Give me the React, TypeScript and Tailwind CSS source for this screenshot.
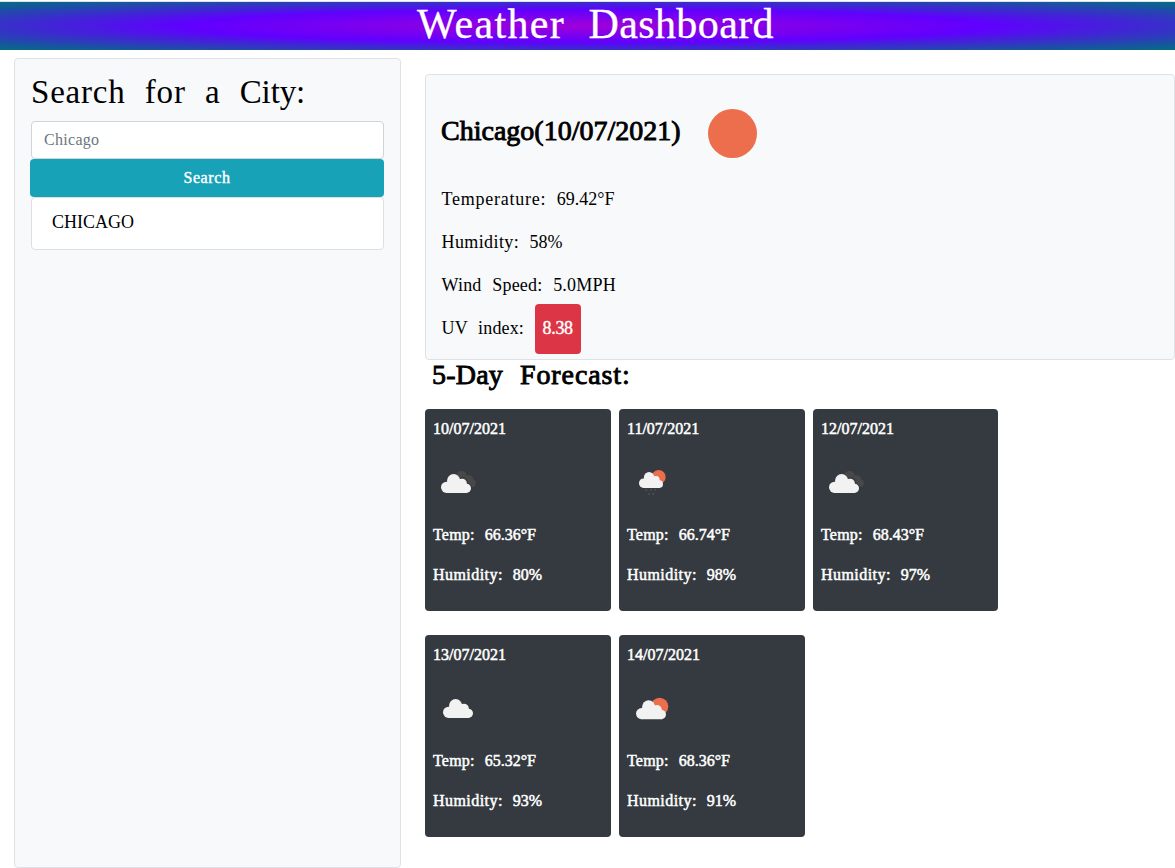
type IconKind = 'broken' | 'rain' | 'cloud' | 'few';

function Cloud({ transform }: { transform: string }) {
  return (
    <g transform={transform} fill="#f2f2f2">
      <circle cx="5.6" cy="13.3" r="5.6" />
      <circle cx="12.6" cy="6.5" r="6.5" />
      <circle cx="21" cy="9.5" r="4.8" />
      <circle cx="25.4" cy="14.3" r="4.6" />
      <path d="M5.4 18.9 V9.5 L6.6 7 L18 5 L25 8.5 L26 12 V18.9 Z" />
    </g>
  );
}

function WeatherIcon({ kind }: { kind: IconKind }) {
  return (
    <svg width="50" height="50" viewBox="0 0 50 50" className="block">
      {kind === 'broken' && (
        <>
          <g fill="#484848">
            <circle cx="28.5" cy="18" r="5.2" />
            <circle cx="36" cy="21.3" r="4" />
            <circle cx="38.8" cy="25.2" r="4" />
            <path d="M27 19 L35 17.5 L41 28 L35 28 Z" />
          </g>
          <path d="M26 21.8 a4.6 4.6 0 0 1 8.4 3.6 a4.8 4.8 0 0 1 4.2 5" stroke="#343a40" strokeWidth="1" fill="none" />
          <Cloud transform="translate(8 16)" />
        </>
      )}
      {kind === 'rain' && (
        <>
          <circle cx="31.7" cy="19" r="7" fill="#ec6e4c" />
          <Cloud transform="translate(12 14) scale(0.8 0.84)" />
          <path
            d="M20 31l-1.4 2.2M24.5 31l-1 1.6M28.7 31l-1 1.6M22.8 34.8l-1.2 2M26.8 34.8l-1.2 2"
            stroke="#505050"
            strokeWidth="1.5"
            fill="none"
          />
        </>
      )}
      {kind === 'cloud' && <Cloud transform="translate(10 15)" />}
      {kind === 'few' && (
        <>
          <circle cx="32.6" cy="22.5" r="8.7" fill="#ec6e4c" />
          <Cloud transform="translate(9 16.3)" />
        </>
      )}
    </svg>
  );
}

const days: { date: string; icon: IconKind; temp: string; humidity: string }[] = [
  { date: '10/07/2021', icon: 'broken', temp: '66.36°F', humidity: '80%' },
  { date: '11/07/2021', icon: 'rain', temp: '66.74°F', humidity: '98%' },
  { date: '12/07/2021', icon: 'broken', temp: '68.43°F', humidity: '97%' },
  { date: '13/07/2021', icon: 'cloud', temp: '65.32°F', humidity: '93%' },
  { date: '14/07/2021', icon: 'few', temp: '68.36°F', humidity: '91%' },
];

export default function App() {
  return (
    <div className="flex h-[868px] w-full flex-col overflow-hidden bg-white font-['Liberation_Serif',serif] text-black">
      <header className="mt-px flex h-[49px] shrink-0 justify-center border-t border-[#dee2e6] bg-[radial-gradient(#a000d8,#6000ff_48%,#007080)]">
        <h1 className="ml-4 mt-[-2px] whitespace-nowrap text-[42px] leading-[48px] text-white [word-spacing:13px] [-webkit-text-stroke:0.3px_white]">
          <span className="tracking-[1.3px]">Weather</span> <span className="tracking-[0.4px]">Dashboard</span>
        </h1>
      </header>

      <div className="flex min-h-0 flex-1">
        <aside className="ml-[14px] mt-2 h-[810px] w-[387px] shrink-0 rounded border border-[#dee2e6] bg-[#f8f9fa] px-4 pt-[14px]">
          <h2 className="h-12 whitespace-nowrap text-[33px] leading-[38px] tracking-[0.8px] [word-spacing:10.2px]">
            Search for a <span className="tracking-[-0.1px]">City:</span>
          </h2>
          <input
            className="block h-[38px] w-[353px] rounded border border-[#ced4da] bg-white px-3 text-[16px] tracking-[0.3px] placeholder:text-[#6c757d]"
            placeholder="Chicago"
          />
          <button className="-ml-px block h-[38px] w-[354px] rounded bg-[#17a2b8] text-[16px] tracking-[0.6px] text-white [-webkit-text-stroke:0.4px_white]">
            Search
          </button>
          <ul className="h-[53px] w-[353px] rounded border border-[#dfdfdf] bg-white px-5 pt-[11px]">
            <li className="text-[18px] leading-[26px]">CHICAGO</li>
          </ul>
        </aside>

        <main className="ml-6 flex-1 pt-6">
          <section className="h-[286px] rounded border border-[#dee2e6] bg-[#f8f9fa] pl-[15px]">
            <div className="flex h-[111px] items-center">
              <h3 className="mt-px w-[241px] whitespace-nowrap text-[28px] leading-[34px] [-webkit-text-stroke:0.9px_black]">
                Chicago(10/07/2021)
              </h3>
              <svg width="50" height="50" viewBox="0 0 50 50" className="ml-[25px] mt-[5px]">
                <circle cx="25.5" cy="25.5" r="24.5" fill="#ec6e4c" />
              </svg>
            </div>
            <div className="pl-[0.5px] text-[18px] leading-[27px] [word-spacing:6px]">
              <p className="mb-4">
                <span className="tracking-[0.75px]">Temperature:</span> 69.42°F
              </p>
              <p className="mb-4">
                <span className="tracking-[0.4px]">Humidity:</span> 58%
              </p>
              <p className="mb-4 tracking-[0.2px]">Wind Speed: 5.0MPH</p>
              <p>
                <span className="tracking-[0.15px]">UV index:</span>{' '}
                <span className="rounded-[4px] bg-[#dc3545] px-2 pb-4 pt-[14px] tracking-[-0.3px] text-white [-webkit-text-stroke:0.4px_white]">
                  8.38
                </span>
              </p>
            </div>
          </section>

          <h3 className="ml-[7px] h-[49px] whitespace-nowrap text-[28px] leading-[30px] [word-spacing:10px] [-webkit-text-stroke:0.9px_black]">
            <span className="tracking-[0.2px]">5-Day</span> <span className="tracking-[0.9px]">Forecast:</span>
          </h3>

          <div className="grid grid-cols-[186px_186px_185px] gap-x-2 gap-y-6">
            {days.map((d) => (
              <article
                key={d.date}
                className="h-[202px] rounded-[4px] bg-[#343a40] px-2 pt-2 text-[16px] leading-6 text-white [word-spacing:6px] [-webkit-text-stroke:0.5px_white]"
              >
                <p className="mb-[17px]">{d.date}</p>
                <WeatherIcon kind={d.icon} />
                <p className="mb-4 mt-[15px]">
                  <span className="tracking-[0.2px]">Temp:</span> {d.temp}
                </p>
                <p>
                  <span className="tracking-[0.45px]">Humidity:</span> {d.humidity}
                </p>
              </article>
            ))}
          </div>
        </main>
      </div>
    </div>
  );
}
